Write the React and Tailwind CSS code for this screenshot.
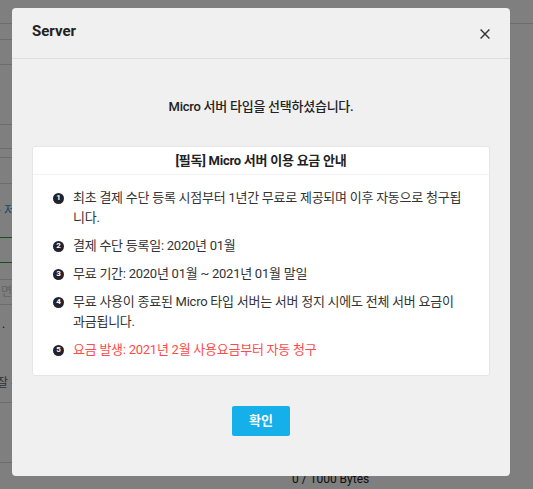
import React from "react";

function Num({ n }) {
  return (
    <span className="mt-[4.5px] flex h-[11px] w-[11px] shrink-0 items-center justify-center rounded-full bg-[#22222e] text-[8px] font-bold leading-none text-white">
      {n}
    </span>
  );
}

function Item({ n, children, red, keep }) {
  return (
    <li className="mb-2 flex gap-[9px] last:mb-0">
      <Num n={n} />
      <p
        className={
          "w-[399px] text-[13px] leading-[20px] tracking-[-0.25px] " +
          (red ? "text-[#ff4b4b] " : "text-[#333] ") +
          (keep ? "break-keep" : "")
        }
      >
        {children}
      </p>
    </li>
  );
}

export default function App() {
  return (
    <div className="relative h-[489px] w-[533px] overflow-hidden bg-white font-[Roboto,Noto_Sans_CJK_KR,sans-serif] text-[#222]">
      {/* underlying page */}
      <div className="flex flex-col">
        <div className="h-[24px] border-b border-[#d8d8d8]" />
        <div className="w-[480px]">
          <div className="h-[16px] border-b border-[#d8d8d8]" />
          <div className="h-[25px] border-b border-[#d8d8d8]" />
          <div className="h-[60px] border-b border-[#d8d8d8]" />
          <div className="h-[24px] border-b border-[#d8d8d8]" />
          <div className="h-[9px] border-b border-[#d8d8d8]" />
          <div className="h-[26px] border-b border-[#d8d8d8]" />
          <div className="flex h-[54px] items-center border-b border-[#2e9e3e]">
            <span className="ml-[-10px] text-[12px] text-[#1e8cd0]">는 저</span>
          </div>
          <div className="h-[25px] border-b border-[#2e9e3e]" />
          <div className="h-[17px] border-b border-[#d8d8d8]" />
          <div className="flex h-[25px] items-center border-b border-[#d8d8d8]">
            <span className="ml-[1px] text-[12px] text-[#c8c8c8]">면</span>
          </div>
          <div className="h-[98px] border-b border-[#d8d8d8] pt-[10px]">
            <p className="ml-[2px] text-[12px] leading-[18px] text-[#222]">.</p>
            <p className="ml-[-3px] mt-[41px] text-[12px] leading-[18px] text-[#666]">잘 수</p>
          </div>
          <div className="h-[60px] border-b border-[#d8d8d8]" />
          <p className="ml-[292px] mt-[8px] text-[12px] leading-[16px] text-[#222]">0 / 1000 Bytes</p>
        </div>
      </div>

      {/* overlay */}
      <div className="absolute inset-0 bg-black/50" />

      {/* modal */}
      <div className="absolute left-[12px] top-[8px] flex h-[468px] w-[498px] flex-col rounded-[4px] bg-[#f0f0f0]">
        <div className="flex h-[51px] items-start justify-between border-b border-[#dedede] px-5">
          <h2 className="pt-[14px] text-[15px] font-bold leading-[18px] text-[#222]">Server</h2>
          <button className="mt-[21px] text-[#333]">
            <svg width="10" height="10" viewBox="0 0 10 10" fill="none">
              <path d="M0.6 0.6 L9.4 9.4 M9.4 0.6 L0.6 9.4" stroke="#333" strokeWidth="1.4" />
            </svg>
          </button>
        </div>

        <div className="flex flex-col px-5 pt-[38px]">
          <p className="text-center text-[13px] font-medium leading-[20px] tracking-[-0.25px] text-[#222]">
            Micro 서버 타입을 선택하셨습니다.
          </p>

          <div className="mt-[29px] rounded-[3px] border border-[#e6e6e6] bg-white">
            <div className="flex h-[28px] items-center justify-center border-b border-[#f2f2f2]">
              <h3 className="text-[13px] font-bold tracking-[-0.25px] text-[#222]">[필독] Micro 서버 이용 요금 안내</h3>
            </div>
            <ul className="pb-[15px] pl-[20px] pt-[13px]">
              <Item n="1">최초 결제 수단 등록 시점부터 1년간 무료로 제공되며 이후 자동으로 청구됩니다.</Item>
              <Item n="2">결제 수단 등록일: 2020년 01월</Item>
              <Item n="3">무료 기간: 2020년 01월 ~ 2021년 01월 말일</Item>
              <Item n="4" keep>무료 사용이 종료된 Micro 타입 서버는 서버 정지 시에도 전체 서버 요금이 과금됩니다.</Item>
              <Item n="5" red>요금 발생: 2021년 2월 사용요금부터 자동 청구</Item>
            </ul>
          </div>

          <div className="mt-[30px] flex justify-center">
            <button className="h-[30px] w-[58px] rounded-[2px] bg-[#15afe9] text-[13px] font-bold text-white">
              확인
            </button>
          </div>
        </div>
      </div>
    </div>
  );
}
